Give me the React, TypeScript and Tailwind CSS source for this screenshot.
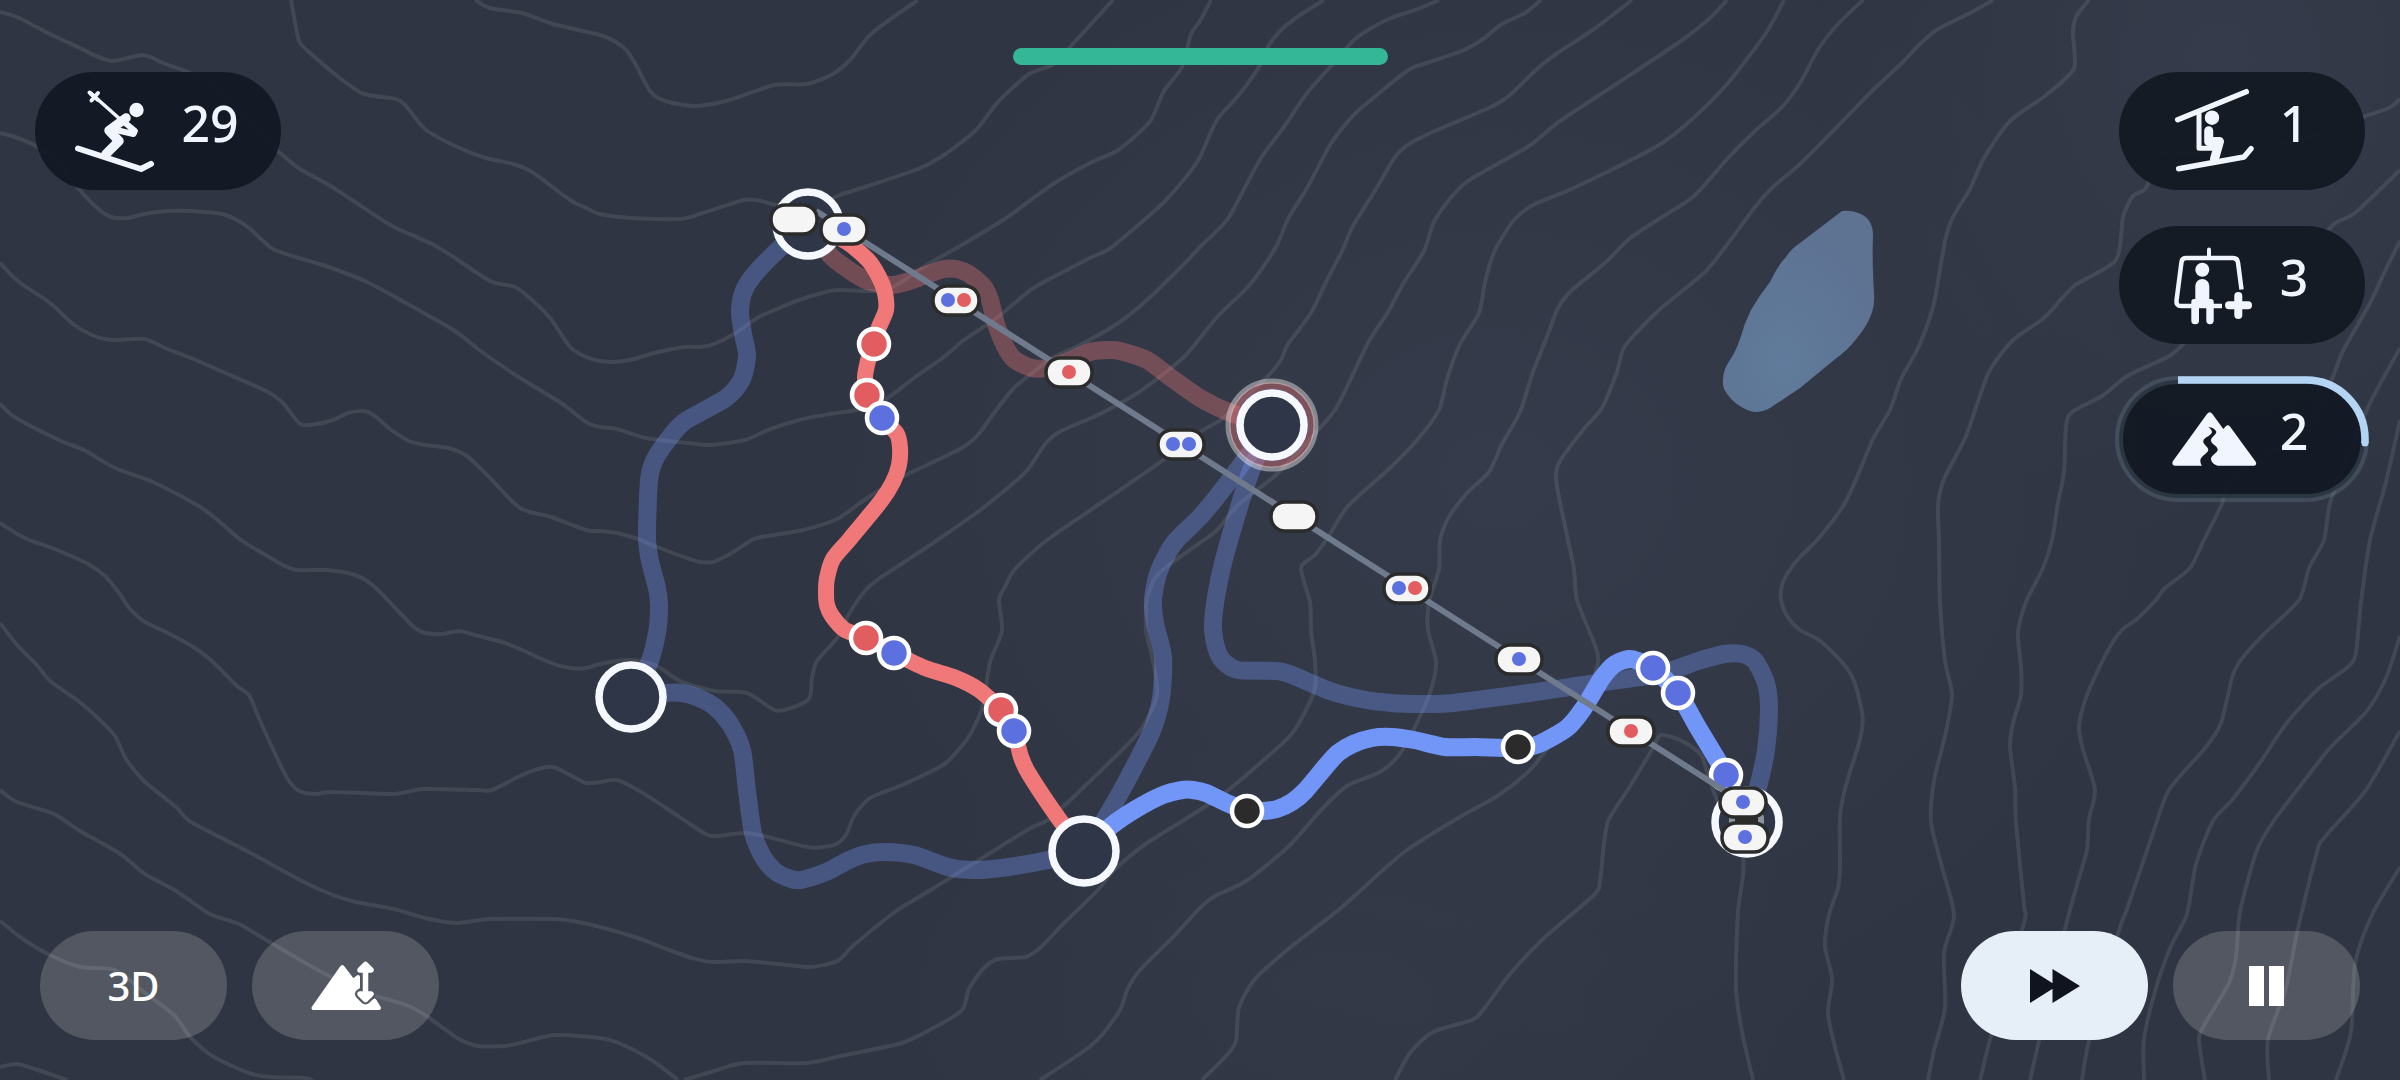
import React from "react";

const CONTOURS = [
  "0,12 17,17 50,34 80,48 96,56 111,61 128,58 142,55 153,58 163,63 188,72 210,84 226,98 249,124 279,152 300,169 329,185 352,200 387,223 398,229 432,244 452,256 490,281 515,287 532,300 551,319 570,347 586,357 600,361 615,362 634,359 654,353 684,347 700,347 714,344 734,334 757,318 772,311 799,300 822,293 837,290 876,291 895,286 925,266 960,246 1006,218 1053,184 1090,163 1115,152 1132,139 1151,120 1164,91 1182,67 1191,34 1200,21 1211,0",
  "0,133 15,137 36,146 57,162 78,188 96,207 111,217 128,218 144,214 168,211 191,211 222,214 237,220 249,228 270,247 283,253 302,259 329,267 367,282 406,303 455,331 478,349 517,376 561,403 586,422 600,427 617,429 646,438 688,443 711,445 745,440 768,430 799,420 830,414 856,410 883,401 914,378 944,357 964,340 998,317 1032,289 1065,271 1092,257 1109,249 1136,227 1163,203 1186,177 1200,157 1210,134 1219,117 1238,96 1259,67 1269,45 1282,29 1300,15 1324,0",
  "0,263 19,282 50,303 73,324 92,335 111,340 144,339 165,348 191,358 230,375 268,392 283,403 300,424 316,424 333,420 348,413 364,411 375,416 390,429 409,441 425,445 448,448 467,456 490,478 520,508 551,517 586,530 600,531 617,533 638,539 657,547 696,561 713,562 730,554 744,545 757,538 803,530 837,519 860,503 883,488 906,475 960,449 977,436 994,413 1013,389 1031,374 1052,358 1078,346 1117,324 1147,300 1186,262 1200,247 1227,220 1242,193 1261,158 1286,124 1307,93 1332,65 1353,41 1368,30 1391,18 1418,9 1439,0",
  "0,404 16,418 61,441 84,450 115,468 153,482 197,505 214,517 241,540 264,554 283,565 297,570 325,570 348,573 364,579 379,591 398,611 415,628 425,633 442,634 459,631 475,635 505,643 522,650 551,663 570,668 586,668 600,664 617,661 634,660 657,666 680,681 715,691 747,693 774,710 788,709 809,699 812,678 817,661 837,638 849,614 864,592 877,580 906,561 939,539 979,511 1017,480 1029,468 1046,443 1061,431 1098,415 1136,394 1166,372 1186,355 1200,338 1219,315 1246,289 1261,270 1277,245 1288,219 1307,188 1330,145 1344,126 1359,110 1407,71 1430,62 1464,50 1483,39 1502,24 1525,13 1541,0",
  "0,523 19,535 29,540 57,550 88,564 105,576 119,593 130,609 145,622 168,633 195,648 214,663 237,686 249,695 258,716 272,747 287,778 299,791 316,794 333,792 394,794 423,789 478,790 492,790 520,776 538,769 553,767 570,775 586,783 600,782 617,780 634,788 657,802 696,828 712,836 745,833 768,837 807,847 824,847 838,843 847,833 854,816 870,798 902,785 943,765 960,748 971,733 983,705 990,662 1002,631 999,600 1006,585 1015,569 1047,540 1098,505 1136,479 1166,458 1200,432 1223,418 1269,375 1282,358 1288,344 1311,313 1326,282 1342,251 1353,226 1376,189 1395,157 1409,144 1437,130 1491,107 1510,95 1537,69 1556,54 1594,29 1632,0",
  "0,623 17,645 36,664 50,681 77,700 101,721 115,736 126,759 144,781 176,807 191,822 245,850 306,883 333,895 356,902 394,909 425,918 457,923 490,919 555,919 578,922 600,927 638,938 669,950 692,958 711,962 744,961 768,963 807,967 824,965 839,960 854,945 895,912 929,891 987,855 1029,829 1048,820 1065,805 1086,785 1120,752 1142,728 1157,695 1153,661 1146,630 1147,599 1155,578 1170,564 1197,545 1217,530 1238,505 1277,474 1319,429 1338,405 1368,343 1388,312 1403,284 1424,251 1433,224 1445,205 1464,184 1483,172 1529,146 1560,121 1621,81 1678,43 1709,19 1727,0",
  "0,790 17,802 54,814 80,831 119,853 145,874 176,891 210,914 239,924 268,941 325,974 367,993 406,1005 425,1015 459,1039 478,1046 505,1046 524,1042 555,1035 600,1038 619,1043 650,1059 678,1080",
  "684,1080 711,1072 744,1063 807,1063 845,1055 902,1043 937,1026 962,1010 969,989 983,969 998,959 1025,957 1040,948 1063,924 1098,890 1113,871 1147,843 1200,810 1227,791 1250,772 1290,736 1305,712 1315,688 1315,661 1311,630 1310,602 1301,568 1315,555 1326,540 1330,534 1349,505 1391,467 1418,439 1439,410 1447,379 1460,344 1479,313 1485,282 1495,250 1514,220 1533,205 1567,191 1613,169 1659,145 1690,121 1728,83 1766,33 1784,0",
  "0,921 23,939 50,955 80,967 115,970 145,993 174,1015 191,1038 214,1057 249,1073 270,1077 306,1078 314,1082",
  "0,1067 17,1064 38,1070 67,1080",
  "475,0 490,8 522,13 553,24 600,35 616,42 627,51 636,65 650,91 665,101 695,106 730,100 774,85 807,84 833,74 851,59 872,33 918,0",
  "291,0 297,33 300,43 310,53 341,79 364,94 396,99 406,106 425,129 455,146 486,158 513,164 532,172 570,200 586,208 600,214 631,218 680,219 703,213 744,200 761,201 776,205 808,210 837,196 868,186 918,169 941,157 975,131 998,102 1029,74 1052,65 1071,46 1113,0",
  "1040,1080 1084,1051 1101,1036 1120,1010 1128,988 1140,970 1174,936 1200,908 1215,896 1246,881 1288,847 1322,809 1347,786 1380,772 1399,755 1414,729 1430,693 1436,662 1428,630 1429,602 1439,569 1440,540 1449,517 1468,492 1489,472 1502,444 1520,412 1533,372 1548,334 1558,308 1571,291 1606,262 1629,239 1659,219 1694,196 1728,158 1755,131 1782,107 1800,83 1819,48 1838,24 1863,0",
  "1202,1080 1227,1055 1236,1041 1239,1008 1255,979 1292,946 1342,907 1403,853 1460,817 1499,795 1529,771 1548,748 1583,705 1598,662 1594,643 1577,600 1574,569 1568,540 1558,492 1556,474 1560,461 1583,430 1602,408 1617,372 1625,346 1659,310 1705,272 1732,238 1755,207 1774,186 1800,164 1838,126 1873,90 1901,64 1919,45 1938,29 1972,12 1993,0",
  "1395,1080 1410,1053 1433,1032 1472,1020 1483,1010 1510,974 1544,938 1594,895 1600,881 1604,843 1609,819 1629,788 1653,748 1661,735 1682,741 1701,755 1709,778 1717,800 1743,859 1738,912 1736,988 1742,1032 1753,1080",
  "1844,1080 1833,1039 1828,1012 1832,979 1825,946 1829,915 1838,888 1840,867 1840,816 1846,785 1857,750 1862,729 1862,712 1854,681 1842,662 1819,640 1800,630 1787,616 1781,600 1782,585 1789,571 1800,557 1818,539 1842,508 1855,482 1873,439 1890,410 1901,379 1919,346 1934,303 1945,241 1953,217 1970,189 1984,158 2010,121 2045,96 2068,76 2075,65 2073,31 2077,15 2089,0",
  "1928,1080 1934,1050 1945,1008 1944,953 1954,915 1942,867 1931,822 1934,781 1945,736 1952,695 1945,661 1940,602 1939,540 1938,506 1944,479 1966,436 1988,374 2012,341 2045,317 2074,286 2116,260 2123,217 2133,196 2146,188 2160,155 2183,153 2221,155 2259,148 2324,133 2351,121 2389,108 2400,99",
  "1980,1080 1991,1036 2010,970 2025,919 2024,905 2016,822 2015,788 2010,747 2013,723 2021,695 2021,667 2018,633 2026,602 2043,568 2052,540 2058,503 2064,472 2066,427 2072,412 2102,396 2129,375 2171,355 2198,331 2232,320 2263,300 2305,258 2334,224 2355,213 2400,170",
  "2030,1080 2039,1041 2064,933 2079,878 2087,850 2089,819 2095,790 2083,750 2079,726 2087,695 2106,654 2121,631 2137,619 2156,600 2165,588 2190,568 2204,540 2221,506 2231,479 2259,456 2282,446 2313,420 2332,379 2343,351 2370,303 2386,269 2400,241",
  "2082,1080 2089,1041 2118,934 2127,909 2152,836 2169,790 2206,747 2221,723 2232,678 2240,661 2263,635 2299,600 2309,568 2324,540 2330,503 2347,458 2370,403 2400,348",
  "2144,1080 2144,1039 2156,988 2171,946 2187,914 2196,864 2213,821 2232,800 2259,764 2286,724 2317,690 2349,666 2356,652 2361,602 2370,540 2386,482 2400,420",
  "2205,1080 2199,1039 2206,1022 2229,983 2236,957 2240,912 2257,850 2275,819 2301,785 2330,748 2366,712 2386,678 2400,636",
  "2269,1080 2268,1039 2286,988 2297,933 2317,852 2324,838 2366,790 2400,731",
  "2336,1080 2351,1032 2355,964 2372,915 2400,867",
];

const BLUE = "#7296f7";
const RED = "#f07878";

type Run = { color: string; points: string };

const CLOSED_RUNS: Run[] = [
  {
    color: BLUE,
    points:
      "808,224 780,248 753,276 743,293 740,312 743,334 747,355 742,379 726,398 684,422 667,441 654,461 649,480 647,537 650,561 657,588 659,605 657,633 648,666 631,697",
  },
  {
    color: BLUE,
    points:
      "631,697 665,693 682,693 699,698 715,707 730,724 742,750 747,791 753,833 763,857 776,872 791,879 801,880 826,872 849,860 866,854 885,852 914,855 948,867 975,870 1009,867 1048,860 1084,851",
  },
  {
    color: BLUE,
    points:
      "1084,851 1105,819 1124,786 1151,733 1161,698 1163,657 1155,623 1153,599 1159,571 1174,543 1200,517 1223,489 1244,461 1272,425",
  },
  {
    color: BLUE,
    points:
      "1272,425 1252,468 1231,534 1219,581 1213,623 1216,647 1223,661 1238,670 1277,671 1292,675 1330,691 1361,699 1391,703 1422,704 1453,703 1529,693 1583,685 1659,674 1698,661 1724,654 1742,654 1755,661 1766,683 1769,709 1766,750 1757,791 1747,821",
  },
  {
    color: RED,
    points:
      "808,224 830,255 849,270 868,281 891,285 906,282 929,274 944,269 956,269 969,274 983,286 990,300 996,324 1006,348 1015,360 1032,368 1046,368 1067,362 1090,352 1109,350 1120,351 1147,360 1170,377 1200,398 1231,413 1272,425",
  },
];

const OPEN_BLUE =
  "1084,851 1111,826 1136,809 1163,795 1182,790 1193,790 1206,793 1227,803 1247,811 1263,811 1277,809 1292,802 1305,791 1326,766 1338,753 1353,744 1372,738 1391,737 1414,740 1445,747 1476,747 1518,748 1539,744 1567,728 1583,709 1602,678 1615,664 1629,659 1638,661 1653,668 1678,693 1697,726 1726,775 1747,822";

const OPEN_RED =
  "808,224 845,241 868,260 879,277 885,293 886,310 879,327 873,344 867,365 865,379 868,395 882,418 897,434 900,448 899,465 893,482 881,501 849,540 833,559 827,578 826,592 827,605 832,616 845,630 866,638 894,653 925,668 956,678 979,690 1001,710 1014,731 1021,757 1029,774 1059,819 1084,851";

const STATIONS = [
  [808, 224],
  [631, 697],
  [1084, 851],
  [1272, 425],
  [1747, 822],
];

const SKILL: Record<string, string> = {
  blue: "#5c70e0",
  red: "#e15d5f",
  black: "#2b2b2b",
};

const SKIERS = [
  { x: 874, y: 344, skill: "red" },
  { x: 867, y: 395, skill: "red" },
  { x: 882, y: 418, skill: "blue" },
  { x: 866, y: 638, skill: "red" },
  { x: 894, y: 653, skill: "blue" },
  { x: 1001, y: 710, skill: "red" },
  { x: 1014, y: 731, skill: "blue" },
  { x: 1653, y: 668, skill: "blue" },
  { x: 1678, y: 693, skill: "blue" },
  { x: 1726, y: 775, skill: "blue" },
  { x: 1247, y: 811, skill: "black" },
  { x: 1518, y: 747, skill: "black" },
];

const CHAIRS: { x: number; y: number; riders: string[] }[] = [
  { x: 794, y: 219, riders: [] },
  { x: 844, y: 229, riders: ["blue"] },
  { x: 956, y: 300, riders: ["blue", "red"] },
  { x: 1069, y: 372, riders: ["red"] },
  { x: 1181, y: 444, riders: ["blue", "blue"] },
  { x: 1294, y: 516, riders: [] },
  { x: 1407, y: 588, riders: ["blue", "red"] },
  { x: 1519, y: 659, riders: ["blue"] },
  { x: 1631, y: 731, riders: ["red"] },
  { x: 1743, y: 802, riders: ["blue"] },
  { x: 1745, y: 837, riders: ["blue"] },
];

// Catmull-Rom spline through the points, written as cubic segments
const smooth = (points: string) => {
  const pts = points.split(" ").map((pair) => pair.split(",").map(Number));
  let d = `M${pts[0][0]} ${pts[0][1]}`;
  for (let i = 0; i < pts.length - 1; i++) {
    const [x0, y0] = pts[Math.max(i - 1, 0)];
    const [x1, y1] = pts[i];
    const [x2, y2] = pts[i + 1];
    const [x3, y3] = pts[Math.min(i + 2, pts.length - 1)];
    d += ` C${x1 + (x2 - x0) / 8} ${y1 + (y2 - y0) / 8} ${x2 - (x3 - x1) / 8} ${y2 - (y3 - y1) / 8} ${x2} ${y2}`;
  }
  return d;
};

const Chair = ({ x, y, riders }: { x: number; y: number; riders: string[] }) => (
  <g>
    <rect
      x={x - 23}
      y={y - 14}
      width="46"
      height="29"
      rx="14"
      fill="#f5f5f5"
      stroke="#2b2b2b"
      strokeWidth="3.5"
    />
    {riders.map((rider, i) => (
      <circle
        key={i}
        cx={riders.length === 1 ? x : x - 8 + i * 16}
        cy={y}
        r="7"
        fill={SKILL[rider]}
      />
    ))}
  </g>
);

const TrailMap = () => (
  <svg
    className="absolute inset-0 h-full w-full"
    viewBox="0 0 2400 1080"
    preserveAspectRatio="xMidYMid slice"
    role="img"
    aria-label="Trail map"
  >
    <defs>
      <radialGradient id="ridge">
        <stop offset="0" stopColor="#353b4a" />
        <stop offset="1" stopColor="#353b4a" stopOpacity="0" />
      </radialGradient>
      <radialGradient id="water" cx="0.4" cy="0.75" r="0.7">
        <stop offset="0" stopColor="#607b9b" />
        <stop offset="1" stopColor="#5e7292" />
      </radialGradient>
    </defs>
    <rect width="2400" height="1080" fill="#2f3542" />
    <ellipse cx="1500" cy="480" rx="700" ry="600" fill="url(#ridge)" />
    <ellipse cx="2220" cy="60" rx="400" ry="480" fill="url(#ridge)" />
    <ellipse cx="1350" cy="1000" rx="500" ry="300" fill="url(#ridge)" opacity="0.6" />

    <g fill="none" stroke="#ffffff" strokeOpacity="0.09" strokeWidth="4" strokeLinejoin="round">
      {CONTOURS.map((points, i) => (
        <path key={i} d={smooth(points)} />
      ))}
    </g>

    <path
      d="M1842 211 Q1852 210 1861 214 Q1873 220 1873 235 Q1872 260 1874 293 Q1875 305 1871 315 Q1867 326 1857 338 Q1848 350 1834 360 L1800 388 L1770 408 Q1763 412 1755 412 Q1747 411 1740 406 Q1730 400 1724 389 Q1720 374 1730 360 Q1736 351 1740 339 Q1744 324 1751 310 Q1759 296 1770 282 Q1778 265 1786 257 Q1791 249 1800 243 Z"
      fill="url(#water)"
    />

    <g fill="none" strokeWidth="18" strokeLinejoin="round" strokeOpacity="0.35">
      {CLOSED_RUNS.map(({ color, points }, i) => (
        <path key={i} d={smooth(points)} stroke={color} />
      ))}
    </g>
    <path d={smooth(OPEN_BLUE)} fill="none" stroke={BLUE} strokeWidth="18" strokeLinejoin="round" />
    <path d={smooth(OPEN_RED)} fill="none" stroke={RED} strokeWidth="16" strokeLinejoin="round" />

    <circle cx="1272" cy="425" r="43" fill={RED} fillOpacity="0.4" />
    <circle cx="1272" cy="425" r="44" fill="none" stroke="#ffffff" strokeOpacity="0.4" strokeWidth="5" />
    <circle cx="1272" cy="425" r="36" fill="#5b74c8" />
    {STATIONS.map(([x, y]) => (
      <circle key={x} cx={x} cy={y} r="32" fill="#2f3647" stroke="#f5f9ff" strokeWidth="7.5" />
    ))}

    {SKIERS.map(({ x, y, skill }) => (
      <circle key={x} cx={x} cy={y} r="15" fill={SKILL[skill]} stroke="#ffffff" strokeWidth="4.5" />
    ))}

    <line x1="816" y1="211" x2="1747" y2="805" stroke="#6f7a8d" strokeWidth="6" />
    <rect x="1729" y="812" width="35" height="16" rx="6" fill="#8d939d" />
    <rect x="1735" y="816" width="23" height="8" fill="#2b2b2b" />
    {CHAIRS.map((chair) => (
      <Chair key={chair.x} {...chair} />
    ))}
  </svg>
);

const SkierIcon = () => (
  <svg
    className="size-20 overflow-visible"
    viewBox="0 0 80 80"
    fill="none"
    stroke="currentColor"
    strokeLinecap="round"
    strokeLinejoin="round"
    aria-hidden="true"
  >
    <circle cx="59.5" cy="19" r="7.2" fill="currentColor" stroke="none" />
    <path d="M13 1.5 L44 29" strokeWidth="3.5" />
    <path d="M12.5 1.5 L16 4.5 M21 2 L14.5 9.5" strokeWidth="4" />
    <path d="M14 3 L21 9" strokeWidth="4" />
    <path d="M49 27 L32 39.5 L42 50 L29 63" strokeWidth="9.5" />
    <path d="M47 31 L58 40 L56.5 43 L39 39" strokeWidth="6" />
    <path d="M1 57.5 L64 78 L74 72.8" strokeWidth="6" />
  </svg>
);

const ChairliftIcon = () => (
  <svg
    className="size-20 overflow-visible"
    viewBox="0 0 80 80"
    fill="none"
    stroke="currentColor"
    strokeLinecap="round"
    strokeLinejoin="round"
    aria-hidden="true"
  >
    <circle cx="36" cy="26.7" r="7.2" fill="currentColor" stroke="none" />
    <path d="M1.7 28.7 L70.3 0.7" strokeWidth="5.5" />
    <path d="M23 21 V57.2 H36" strokeWidth="5" />
    <path d="M32.7 39.7 V50.5 H43.5 L38.5 68" strokeWidth="9" />
    <path d="M2.7 77.7 L68 66 L75 57.7" strokeWidth="5.5" />
  </svg>
);

const GondolaIcon = () => (
  <svg
    className="size-20 overflow-visible"
    viewBox="-1 0 80 80"
    fill="none"
    stroke="currentColor"
    strokeLinejoin="round"
    aria-hidden="true"
  >
    <path d="M32 4.5 V13" strokeWidth="4" strokeLinecap="round" />
    <path
      d="M64.5 44.5 L61 17.5 Q60.5 13 56 13 H9.5 Q5 13 4.5 17 L-0.5 55.5 Q-1 61 4 61 H45"
      strokeWidth="4.5"
    />
    <circle cx="25.3" cy="24.7" r="7" fill="currentColor" stroke="none" />
    <path
      d="M18.3 54 V41 A7 7 0 0 1 32.3 41 V54 H34 Q36.7 54 36.7 57 V75.5 A3.7 3.7 0 0 1 29.3 75.5 V61 H22 V75.5 A3.7 3.7 0 0 1 14.3 75.5 V57 Q14.3 54 17 54 Z"
      fill="currentColor"
      stroke="none"
    />
    <path d="M52 60.3 H71 M61.3 51 V70" strokeWidth="8" strokeLinecap="round" />
  </svg>
);

const PisteIcon = () => (
  <svg className="size-20 overflow-visible" viewBox="0 0 80 80" fill="currentColor" aria-hidden="true">
    <path d="M26 66.7 H-1 Q-5 66 -3 62 L31 15 Q33.7 11.5 36.4 15 L47.3 30 L50 27 Q52 25.5 54 27.5 L79.5 62.5 Q81.5 66 78 66.7 H42.3 C39 66.7 35 63 35 60 C35 56 41.7 54 41.7 50.5 C41.7 47 35 45 35 41.5 C35 38 40.3 36 40.3 33 C40.3 31 36 28 32.3 28 C36 31 37 33 35 35 C32 38 27.3 39 27.3 42.5 C27.3 46 32.3 47.5 32.3 51 C32.3 54 24.3 57 24.3 61.5 C24.3 65 26 66.7 26 66.7 Z" />
  </svg>
);

const ElevationIcon = () => (
  <svg className="h-[50px] w-[70px] overflow-visible" viewBox="0 0 70 50" aria-hidden="true">
    <path
      d="M31.3 6 L2.5 47 H68 L63.5 39.5 L54 45 L43 36 V30 L47 26 V16 L42 20 Z"
      fill="currentColor"
      stroke="currentColor"
      strokeWidth="4"
      strokeLinejoin="round"
    />
    <g fill="none" strokeLinecap="round" strokeLinejoin="round">
      <path d="M54.5 4 V38 M49 9 L54.5 3.5 L60 9 M49 33 L54.5 38.5 L60 33" stroke="#525764" strokeWidth="10" />
      <path d="M54.5 4 V38 M49 9 L54.5 3.5 L60 9 Z M49 33 L54.5 38.5 L60 33 Z" stroke="currentColor" strokeWidth="5.5" />
    </g>
  </svg>
);

const FastForwardIcon = () => (
  <svg className="h-[34px] w-[50px]" viewBox="0 0 50 34" fill="currentColor" aria-hidden="true">
    <path d="M0 0 L27 17 L0 34 Z M22.5 0 L50 17 L22.5 34 Z" />
  </svg>
);

const PauseIcon = () => (
  <svg className="h-10 w-[35px]" viewBox="0 0 35 40" fill="currentColor" aria-hidden="true">
    <path d="M0 0 H15 V40 H0 Z M20 0 H35 V40 H20 Z" />
  </svg>
);

const COUNTER =
  "relative flex h-[118px] w-[246px] items-center justify-center gap-6 rounded-full bg-[#131924]/95 text-[#f1f5ff]";

const Count = ({ value }: { value: number }) => (
  <span className="pb-4 text-[50px] leading-none font-medium">{value}</span>
);

const CooldownRing = () => (
  <svg className="absolute inset-0 h-full w-full overflow-visible" viewBox="0 0 246 118" fill="none" aria-hidden="true">
    <rect width="246" height="118" rx="59" stroke="#8aa3ba" strokeOpacity="0.2" strokeWidth="8" />
    <path d="M59 0 H187 A59 59 0 0 1 246 59 V63" stroke="#b4d4f4" strokeWidth="7.5" />
    <circle cx="246" cy="63" r="3.5" fill="#b4d4f4" />
  </svg>
);

const ACTION = "flex h-[109px] w-[187px] items-center justify-center rounded-full";

export default function App() {
  return (
    <main className="relative h-screen w-full overflow-hidden bg-[#2f3542] font-['Noto_Sans',sans-serif]">
      <TrailMap />

      <div className="relative flex h-full flex-col justify-between">
        <header className="grid grid-cols-[1fr_375px_1fr] px-[35px] pt-12">
          <div className="pt-6">
            <div className={COUNTER} aria-label="Skiers">
              <SkierIcon />
              <Count value={29} />
            </div>
          </div>

          <div
            className="h-[17px] rounded-full bg-[#33b796]"
            role="progressbar"
            aria-label="Day progress"
            aria-valuenow={100}
          />

          <div className="flex flex-col items-end gap-9 pt-6">
            <button type="button" className={COUNTER} aria-label="Build chairlift">
              <ChairliftIcon />
              <Count value={1} />
            </button>
            <button type="button" className={COUNTER} aria-label="Add chairs">
              <GondolaIcon />
              <Count value={3} />
            </button>
            <button type="button" className={COUNTER} aria-label="Build piste">
              <CooldownRing />
              <PisteIcon />
              <Count value={2} />
            </button>
          </div>
        </header>

        <footer className="flex justify-between px-10 pb-10 text-white">
          <div className="flex gap-[25px]">
            <button type="button" className={`${ACTION} bg-white/17 text-[40px] font-medium`}>
              3D
            </button>
            <button type="button" className={`${ACTION} bg-white/17`} aria-label="Show elevation">
              <ElevationIcon />
            </button>
          </div>
          <div className="flex gap-[25px]">
            <button type="button" className={`${ACTION} bg-[#e6eef8] text-[#0f141e]`} aria-label="Fast forward">
              <FastForwardIcon />
            </button>
            <button type="button" className={`${ACTION} bg-white/17`} aria-label="Pause">
              <PauseIcon />
            </button>
          </div>
        </footer>
      </div>
    </main>
  );
}
